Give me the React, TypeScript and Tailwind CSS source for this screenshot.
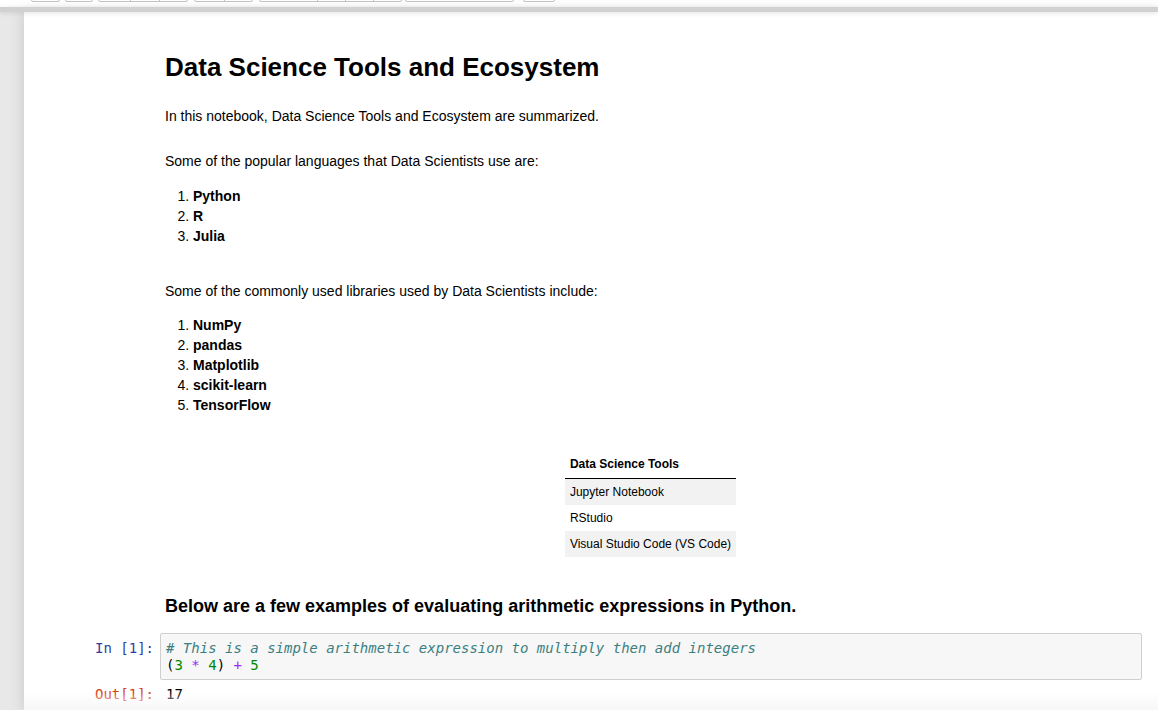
import React from "react"

const sans = "font-['Liberation_Sans',Arial,sans-serif]"
const mono = "font-['DejaVu_Sans_Mono',monospace]"

// toolbar button groups; only their bottom edge peeks out above the header line
const toolbarGroups: { gap: number; widths: number[] }[] = [
  { gap: 31, widths: [29] },
  { gap: 5, widths: [28] },
  { gap: 5, widths: [31, 29, 30] },
  { gap: 6, widths: [29, 30] },
  { gap: 6, widths: [57, 28, 28, 30] },
  { gap: 3, widths: [109] },
  { gap: 9, widths: [32] },
]

const languages = ["Python", "R", "Julia"]
const libraries = ["NumPy", "pandas", "Matplotlib", "scikit-learn", "TensorFlow"]
const tools = ["Jupyter Notebook", "RStudio", "Visual Studio Code (VS Code)"]

function Toolbar() {
  return (
    <div className="h-[7px] bg-white overflow-hidden">
      <div className="flex -mt-[22px]">
        {toolbarGroups.map((g, i) => (
          <div
            key={i}
            style={{ marginLeft: g.gap }}
            className="flex h-[24px] border border-[#c4c4c4] rounded-[2px] bg-white"
          >
            {g.widths.map((w, j) => (
              <div
                key={j}
                style={{ width: j === g.widths.length - 1 ? w - 2 : w }}
                className={j > 0 ? "border-l border-[#c4c4c4]" : ""}
              />
            ))}
          </div>
        ))}
      </div>
    </div>
  )
}

function Cell({ prompt, children }: { prompt?: React.ReactNode; children: React.ReactNode }) {
  return (
    <div className="flex">
      <div className="w-[65px] shrink-0">{prompt}</div>
      <div className="flex-1 min-w-0">{children}</div>
    </div>
  )
}

export default function App() {
  return (
    <div className={`w-[1158px] h-[710px] overflow-hidden bg-[#e8e8e8] flex flex-col ${sans}`}>
      <Toolbar />
      <div className="h-[5px] bg-[#d1d1d1] relative z-10 shadow-[0_1px_5px_rgba(0,0,0,0.12)]" />

      <div className="flex-1 flex min-h-0">
        <div className="w-[24px] shrink-0" />
        <div className="flex-1 relative bg-white shadow-[0_0_12px_1px_rgba(87,87,87,0.2)] pl-[71px] pr-[16px] text-[14px] leading-[20px] text-black">
          {/* markdown cells */}
          <Cell>
            <div className="pl-[5px] pr-[6px]">
              <h1 className="mt-[42px] text-[26px] leading-[26px] font-bold">Data Science Tools and Ecosystem</h1>
              <p className="mt-[26px]">In this notebook, Data Science Tools and Ecosystem are summarized.</p>

              <p className="mt-[25px]">Some of the popular languages that Data Scientists use are:</p>
              <ol className="mt-[15px] list-decimal pl-[28px]">
                {languages.map((l) => (
                  <li key={l}>
                    <strong className="font-bold">{l}</strong>
                  </li>
                ))}
              </ol>

              <p className="mt-[35px]">Some of the commonly used libraries used by Data Scientists include:</p>
              <ol className="mt-[14px] list-decimal pl-[28px]">
                {libraries.map((l) => (
                  <li key={l}>
                    <strong className="font-bold">{l}</strong>
                  </li>
                ))}
              </ol>

              <div className="mt-[36px] flex justify-center">
                <table className="text-[12px] leading-[14px] border-collapse">
                  <thead>
                    <tr>
                      <th className="text-left font-bold px-[5px] pt-[6px] pb-[7px] border-b border-black">Data Science Tools</th>
                    </tr>
                  </thead>
                  <tbody>
                    {tools.map((t, i) => (
                      <tr key={t} className={i % 2 === 0 ? "bg-[#f2f2f2]" : ""}>
                        <td className="px-[5px] py-[6px]">{t}</td>
                      </tr>
                    ))}
                  </tbody>
                </table>
              </div>

              <h3 className="mt-[38px] text-[18px] leading-[22px] font-bold">
                Below are a few examples of evaluating arithmetic expressions in Python.
              </h3>
            </div>
          </Cell>

          {/* code cell */}
          <div className={`mt-[16px] text-[14px] leading-[17px] ${mono}`}>
            <Cell
              prompt={<div className="pt-[7px] pr-[6px] text-right text-[#303F9F]">In&nbsp;[1]:</div>}
            >
              <div className="border border-[#cfcfcf] rounded-[2px] bg-[#f7f7f7] pt-[6px] pb-[5px] px-[5px] whitespace-pre">
                <div className="italic text-[#3d7f7f]"># This is a simple arithmetic expression to multiply then add integers</div>
                <div>
                  (<span className="text-[#008800]">3</span> <span className="text-[#9b2cf5]">*</span>{" "}
                  <span className="text-[#008800]">4</span>) <span className="text-[#9b2cf5]">+</span>{" "}
                  <span className="text-[#008800]">5</span>
                </div>
              </div>
            </Cell>
            <div className="mt-[6px]">
              <Cell prompt={<div className="pr-[6px] text-right text-[#D84315]">Out[1]:</div>}>
                <div className="pl-[6px]">17</div>
              </Cell>
            </div>
          </div>

          <div className="absolute left-0 right-0 bottom-0 h-[18px] bg-gradient-to-b from-transparent to-[#f7f7f7] pointer-events-none" />
        </div>
      </div>
    </div>
  )
}
